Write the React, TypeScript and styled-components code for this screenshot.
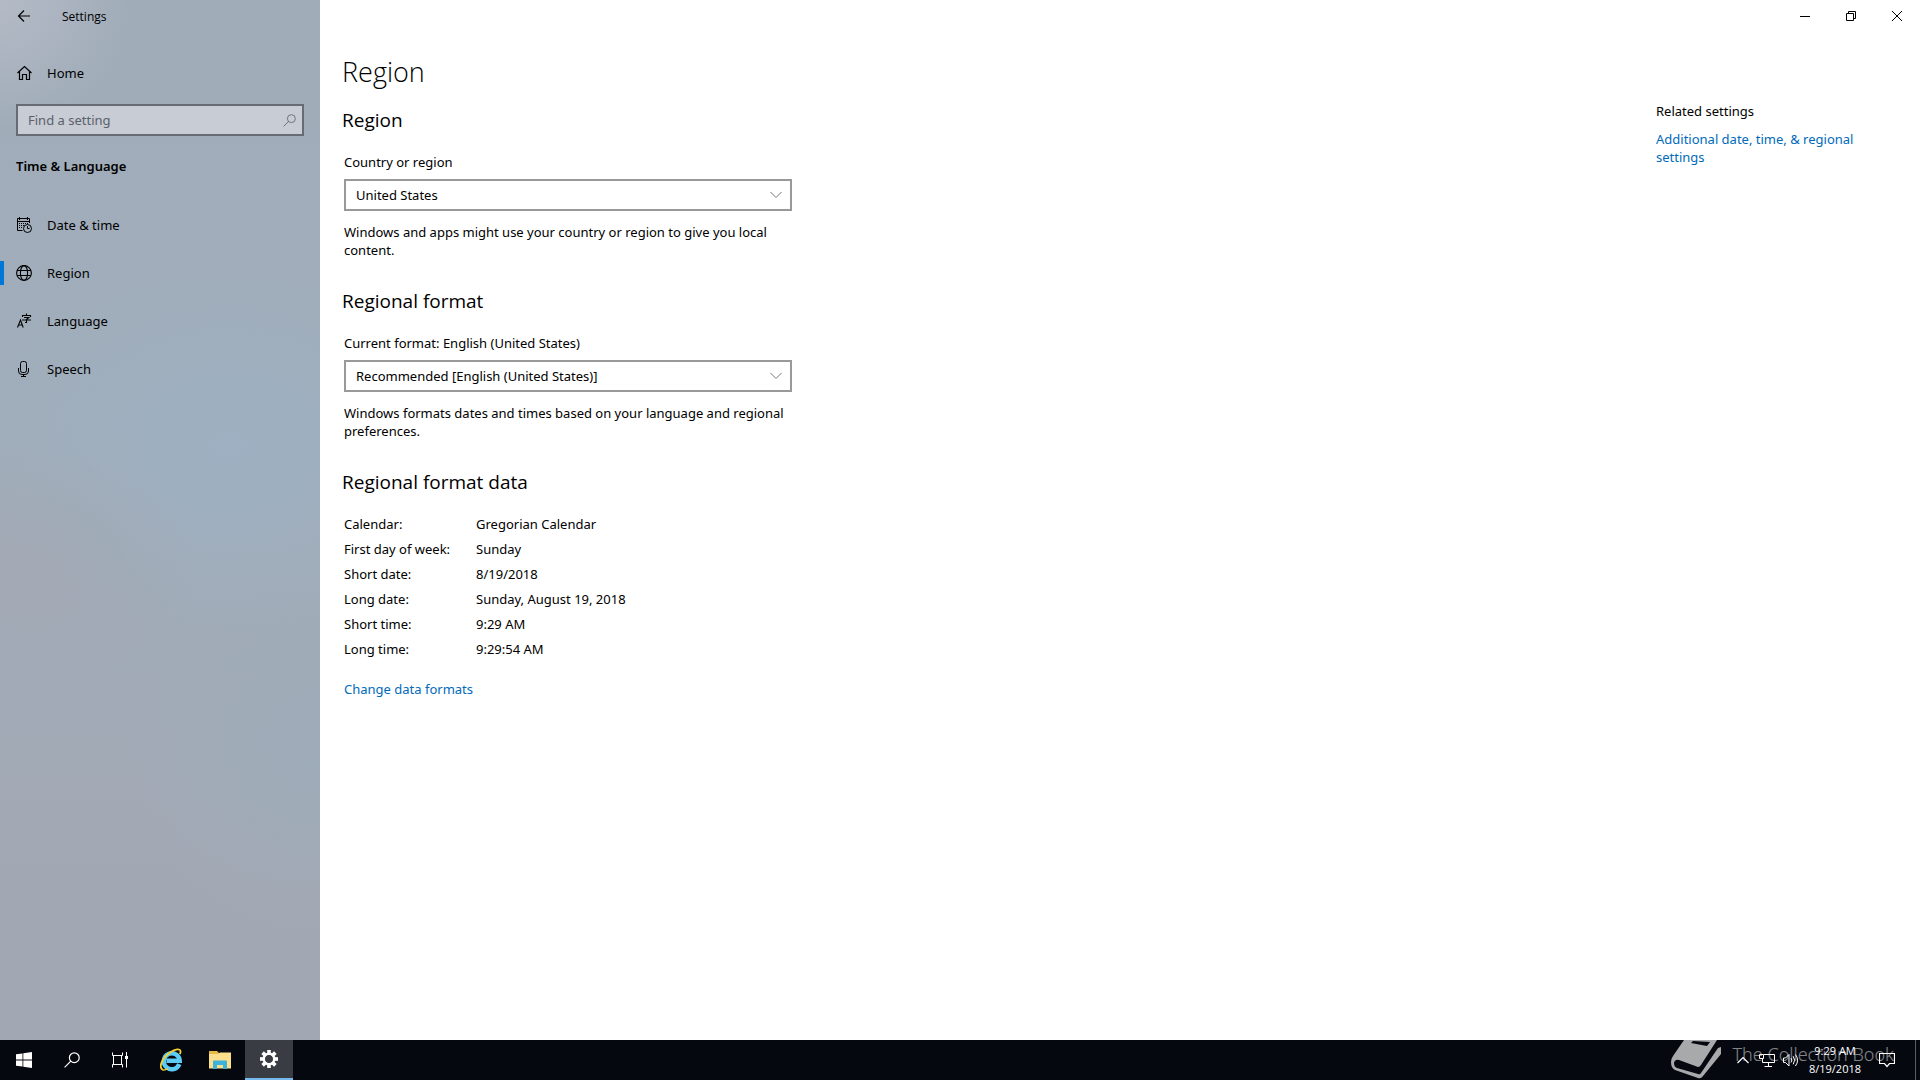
import React from 'react';
import styled, { createGlobalStyle, css } from 'styled-components';

const GlobalStyle = createGlobalStyle`
  *, *::before, *::after { box-sizing: border-box; }
  body {
    margin: 0;
    overflow: hidden;
    background: #fff;
    color: #000;
    font-family: "Noto Sans", "Open Sans", sans-serif;
    font-size: 13px;
    line-height: 18px;
  }
  button, input, select { font: inherit; color: inherit; }
  h1, h2, p { margin: 0; }
`;

const Desktop = styled.div`
  display: flex;
  flex-direction: column;
  height: 100vh;
`;

const Window = styled.div`
  flex: 1;
  min-height: 0;
  display: flex;
`;

const Sidebar = styled.aside`
  width: 320px;
  flex: none;
  background:
    radial-gradient(circle 130px at 0px 0px, rgba(184, 190, 201, 0.8), rgba(184, 190, 201, 0)),
    radial-gradient(ellipse 170px 130px at 30px 570px, rgba(163, 168, 179, 0.7), rgba(163, 168, 179, 0)),
    radial-gradient(ellipse 250px 190px at 230px 450px, rgba(157, 177, 195, 0.8), rgba(157, 177, 195, 0)),
    radial-gradient(ellipse 180px 180px at 310px 760px, rgba(158, 172, 186, 0.8), rgba(158, 172, 186, 0)),
    linear-gradient(180deg, #a1acb9 0%, #a0adba 40%, #a1abb7 62%, #a2a8b3 85%, #a2a8b3 100%);
`;

const TitleBar = styled.header`
  display: flex;
  align-items: center;
  height: 32px;
  font-family: "Open Sans", "Noto Sans", sans-serif;
  font-size: 12px;
`;

const WindowTitle = styled.span`
  padding-top: 2px;
`;

const PlainButton = styled.button`
  border: 0;
  padding: 0;
  background: transparent;
  display: flex;
  align-items: center;
  justify-content: center;
`;

const BackButton = styled(PlainButton)`
  width: 48px;
  height: 32px;
  margin-right: 14px;
`;

const rowStyle = css`
  display: flex;
  align-items: center;
  gap: 15px;
  height: 48px;
  padding-left: 16px;
  color: #000;
  text-decoration: none;
  svg { flex: none; }
`;

const HomeLink = styled.a`
  ${rowStyle}
  margin: 17px 0 7px;
`;

const SearchBox = styled.label`
  display: flex;
  align-items: center;
  height: 32px;
  margin: 0 16px;
  padding: 0 6px 0 10px;
  border: 2px solid #666c75;
  background: #c7ccd5;
  color: #5c6168;
`;

const SearchInput = styled.input`
  flex: 1;
  min-width: 0;
  border: 0;
  padding: 0;
  outline: 0;
  background: transparent;
  &::placeholder { color: #5c6168; opacity: 1; }
`;

const Category = styled.h2`
  padding: 21px 16px 26px;
  font-size: 13px;
  line-height: 18px;
  font-weight: 600;
`;

const NavLink = styled.a<{ $active?: boolean }>`
  ${rowStyle}
  position: relative;
  &::before {
    content: "";
    display: ${p => (p.$active ? 'block' : 'none')};
    position: absolute;
    left: 0;
    top: 12px;
    width: 4px;
    height: 24px;
    background: #0078d7;
  }
`;

const Content = styled.div`
  flex: 1;
  min-width: 0;
  display: flex;
  flex-direction: column;
`;

const WindowControls = styled.div`
  display: flex;
  justify-content: flex-end;
  height: 32px;
`;

const ControlButton = styled(PlainButton)`
  width: 46px;
  height: 32px;
`;

const Columns = styled.div`
  flex: 1;
  display: flex;
  justify-content: space-between;
  padding: 20px 24px 0 22px;
`;

const Main = styled.main`
  width: 450px;
`;

const PageTitle = styled.h1`
  font-family: "Open Sans", "Noto Sans", sans-serif;
  font-size: 27px;
  line-height: 40px;
  font-weight: 300;
`;

const Section = styled.section`
  padding-bottom: 14px;
`;

const SectionTitle = styled.h2`
  padding: 14px 0 19px;
  font-family: "Open Sans", "Noto Sans", sans-serif;
  font-size: 19px;
  line-height: 28px;
  font-weight: 400;
`;

const SectionBody = styled.div`
  padding-left: 2px;
`;

const FieldLabel = styled.label`
  display: block;
  padding-bottom: 8px;
`;

const SelectFrame = styled.div`
  display: grid;
  align-items: center;
  > * { grid-area: 1 / 1; }
  svg { justify-self: end; margin-right: 10px; pointer-events: none; }
`;

const Select = styled.select`
  appearance: none;
  width: 100%;
  height: 32px;
  padding: 0 32px 0 10px;
  border: 2px solid #999;
  border-radius: 0;
  background: #fff;
`;

const Hint = styled.p`
  padding-top: 12px;
`;

const FormatTable = styled.table`
  border-collapse: collapse;
  th, td { padding: 0 0 7px; font-weight: 400; text-align: left; }
  th { width: 132px; }
`;

const TextLink = styled.a`
  color: #006abb;
  text-decoration: none;
`;

const TableLink = styled(TextLink)`
  display: inline-block;
  margin-top: 15px;
`;

const Related = styled.aside`
  width: 240px;
  padding: 50px 30px 0 0;
`;

const RelatedTitle = styled.h2`
  padding-bottom: 10px;
  font-size: 13px;
  line-height: 18px;
  font-weight: 400;
`;

const Taskbar = styled.footer`
  position: relative;
  overflow: hidden;
  flex: none;
  display: flex;
  justify-content: space-between;
  height: 40px;
  background: #05080f;
  color: #fff;
  font-family: "Open Sans", "Noto Sans", sans-serif;
`;

const TaskGroup = styled.div`
  display: flex;
`;

const PinnedApps = styled.div`
  display: flex;
  gap: 1px;
  margin-left: 3px;
`;

const TaskButton = styled(PlainButton)<{ $active?: boolean }>`
  width: 48px;
  height: 40px;
  ${p => p.$active && css`
    background: #393d43;
    border-bottom: 2px solid #76b9ed;
  `}
`;

const TrayButton = styled(PlainButton)`
  width: 24px;
  height: 40px;
`;

const Clock = styled(PlainButton)`
  flex-direction: column;
  width: 64px;
  height: 40px;
  font-size: 11px;
  line-height: 18px;
  white-space: nowrap;
`;

const ActionCenter = styled(PlainButton)`
  width: 40px;
  height: 40px;
`;

const ShowDesktop = styled(PlainButton)`
  width: 5px;
  height: 40px;
  margin-left: 8px;
  border-left: 1px solid #5b5e63;
`;

const Watermark = styled.div`
  position: absolute;
  right: 26px;
  top: 0;
  display: flex;
  gap: 12px;
  height: 40px;
  color: #fff;
  pointer-events: none;
  svg { opacity: 0.65; }
`;

const WatermarkText = styled.span`
  padding-top: 2px;
  font-family: "Noto Sans", "Open Sans", sans-serif;
  font-size: 18px;
  line-height: 24px;
  font-weight: 300;
  opacity: 0.5;
`;

const Line = ({ size = 16, d, width = 1, color = 'currentColor' }: { size?: number; d: string; width?: number; color?: string }) => (
  <svg width={size} height={size} viewBox={`0 0 ${size} ${size}`} fill="none" stroke={color} strokeWidth={width} aria-hidden="true">
    <path d={d} />
  </svg>
);

const HomeIcon = () => <Line width={1.2} d="M1.5 8 L8.5 1.5 L15.5 8 M3.5 6.5 V14.5 H6.5 V9.5 H10.5 V14.5 H13.5 V6.5" />;

const CalendarIcon = () => (
  <svg width="16" height="16" viewBox="0 0 16 16" fill="none" stroke="currentColor" aria-hidden="true">
    <path d="M6.5 13.5H1.5V1.5H13.5V6M1.5 4.5H13.5M3.5 0V3M11.5 0V3" />
    <path d="M3 6.5H12M3 8.5H8M3 10.5H6" strokeDasharray="1 1" />
    <circle cx="11.5" cy="11.5" r="4" />
    <path d="M11.5 9V11.5H13.5" />
  </svg>
);

const GlobeIcon = () => (
  <svg width="16" height="16" viewBox="0 0 16 16" fill="none" stroke="currentColor" strokeWidth="1.1" aria-hidden="true">
    <circle cx="8" cy="8" r="7.4" />
    <ellipse cx="8" cy="8" rx="3.6" ry="7.4" />
    <path d="M1.2 5.5H14.8M1.2 10.5H14.8" />
  </svg>
);

const LanguageIcon = () => (
  <svg width="16" height="16" viewBox="0 0 16 16" fill="none" stroke="currentColor" strokeWidth="1.1" aria-hidden="true">
    <path d="M1.5 14.5L4.5 7L7.2 14.5M2.6 12H6.2" />
    <path d="M10.5 0.5V2M6.5 4V2.5H14.5V4M8 4.5H12.8L10.5 6.5V9.5H9M6 7H15" />
  </svg>
);

const MicIcon = () => <Line d="M4.5 2.5Q4.5 0.5 6.5 0.5H8.5Q10.5 0.5 10.5 2.5V9.5Q10.5 11.5 8.5 11.5H6.5Q4.5 11.5 4.5 9.5ZM2.5 7V10Q2.5 13.5 6 13.5H9Q12.5 13.5 12.5 10V7M7.5 13.5V15.5M5 15.5H10" />;

const SearchIcon = ({ size, width }: { size: number; width: number }) => (
  <svg width={size} height={size} viewBox="0 0 16 16" fill="none" stroke="currentColor" strokeWidth={width} aria-hidden="true">
    <circle cx="10.3" cy="5.7" r="4.9" />
    <path d="M6.8 9.2L0.6 15.4" />
  </svg>
);

const Chevron = () => (
  <svg width="12" height="8" viewBox="0 0 12 8" fill="none" stroke="#777" aria-hidden="true">
    <path d="M0.5 1L6 6.5L11.5 1" />
  </svg>
);

const WindowsLogo = () => (
  <svg width="16" height="16" viewBox="0 0 16 16" fill="#fff" aria-hidden="true">
    <path d="M0 2.3L6.5 1.4V7.6H0ZM7.3 1.3L16 0V7.6H7.3ZM0 8.4H6.5V14.6L0 13.7ZM7.3 8.4H16V16L7.3 14.7Z" />
  </svg>
);

const TaskViewIcon = () => (
  <svg width="16" height="16" viewBox="0 0 16 16" fill="none" stroke="#fff" aria-hidden="true">
    <path d="M0.5 0.5V3.5H10.5V0.5M1.5 3.5V12.5M9.5 3.5V12.5M0.5 15.5V12.5H10.5V15.5M14.5 0V15.5" />
    <path d="M13 4H16V7H13Z" fill="#fff" stroke="none" />
  </svg>
);

const ExplorerLogo = () => (
  <svg width="22" height="24" viewBox="0 0 22 24" fill="none" aria-hidden="true">
    <path d="M19.3 16.1A8 8 0 1 1 19.8 12.8H6.5" stroke="#5ccbf6" strokeWidth="4.4" />
    <path d="M3 22C-2 19.5 2 10 10 4.5C15 1 20.5 0.3 20.5 3.4C20.6 4.4 20.2 5.4 19.8 6.1" stroke="#f7cf2e" strokeWidth="1.8" />
    <path d="M3 22C4.5 22.5 6.5 21.5 8 20.7" stroke="#f7cf2e" strokeWidth="1.4" />
  </svg>
);

const FolderIcon = () => (
  <svg width="22" height="18" viewBox="0 0 22 18" aria-hidden="true">
    <path d="M0 0H8L10 2H21V6H0Z" fill="#e8b84b" />
    <path d="M0 3H9L11 1.5H22V17.5H0Z" fill="#fbdf8d" />
    <path d="M4 18V10.5Q4 9.5 5 9.5H17Q18 9.5 18 10.5V18H14V14H8V18Z" fill="#3fb2d9" />
  </svg>
);

const GearIcon = () => (
  <svg width="18" height="18" viewBox="-9 -9 18 18" aria-hidden="true">
    {[0, 45, 90, 135].map(a => (
      <rect key={a} x="-1.8" y="-9" width="3.6" height="18" fill="#fff" transform={`rotate(${a})`} />
    ))}
    <circle r="5.2" fill="#393d43" stroke="#fff" strokeWidth="2.6" />
    <circle r="3.8" fill="#393d43" />
  </svg>
);

const NetworkIcon = () => (
  <svg width="16" height="16" viewBox="0 0 16 16" fill="none" stroke="#fff" aria-hidden="true">
    <path d="M5 2.5H15.5V10.5H3.5V6M0.5 2.5H4.5V6.5H0.5ZM9.5 10.5V14.5M5.5 14.5H13" />
  </svg>
);

const VolumeIcon = () => (
  <svg width="16" height="16" viewBox="0 0 16 16" fill="none" stroke="#fff" aria-hidden="true">
    <path d="M0.5 6H2.5L6 2.5V14L2.5 10.5H0.5ZM8 6Q9.6 8.2 8 10.5M10.2 4.2Q13 8.2 10.2 12.3M12.4 2.5Q16.8 8.2 12.4 14" />
  </svg>
);

const BookIcon = () => (
  <svg width="50" height="40" viewBox="0 0 50 40" fill="#fff" fillRule="evenodd" aria-hidden="true">
    <path d="M13 0H46L30 25Q29 27 27 27L8 20Q4 19 3 23Q3 27 6 28L27 34Q29 35 30 33L47 8L50 7V14L32 36Q30 39 27 38L4 30Q0 28 0 22Q0 19 2 16ZM22 1L39 2L36 6L20 3Z" />
  </svg>
);

const navItems = [
  { label: 'Date & time', icon: <CalendarIcon /> },
  { label: 'Region', icon: <GlobeIcon />, active: true },
  { label: 'Language', icon: <LanguageIcon /> },
  { label: 'Speech', icon: <MicIcon /> },
];

const formats = [
  ['Calendar:', 'Gregorian Calendar'],
  ['First day of week:', 'Sunday'],
  ['Short date:', '8/19/2018'],
  ['Long date:', 'Sunday, August 19, 2018'],
  ['Short time:', '9:29 AM'],
  ['Long time:', '9:29:54 AM'],
];

export default function App() {
  return (
    <Desktop>
      <GlobalStyle />
      <Window>
        <Sidebar>
          <TitleBar>
            <BackButton aria-label="Back"><Line width={1.2} d="M14 8H2.5M8 2.5L2.5 8L8 13.5" /></BackButton>
            <WindowTitle>Settings</WindowTitle>
          </TitleBar>
          <HomeLink href="#home"><HomeIcon />Home</HomeLink>
          <SearchBox>
            <SearchInput type="text" placeholder="Find a setting" aria-label="Find a setting" />
            <SearchIcon size={13} width={1} />
          </SearchBox>
          <Category>Time &amp; Language</Category>
          <nav>
            {navItems.map(n => (
              <NavLink key={n.label} href="#nav" $active={n.active}>{n.icon}{n.label}</NavLink>
            ))}
          </nav>
        </Sidebar>
        <Content>
          <WindowControls>
            <ControlButton aria-label="Minimize"><Line size={10} d="M0 5.5H10" /></ControlButton>
            <ControlButton aria-label="Restore"><Line size={10} d="M0.5 2.5H7.5V9.5H0.5ZM2.5 2.5V0.5H9.5V7.5H7.5" /></ControlButton>
            <ControlButton aria-label="Close"><Line size={10} d="M0 0L10 10M10 0L0 10" /></ControlButton>
          </WindowControls>
          <Columns>
            <Main>
              <PageTitle>Region</PageTitle>
              <Section>
                <SectionTitle>Region</SectionTitle>
                <SectionBody>
                  <FieldLabel htmlFor="country">Country or region</FieldLabel>
                  <SelectFrame>
                    <Select id="country"><option>United States</option></Select>
                    <Chevron />
                  </SelectFrame>
                  <Hint>Windows and apps might use your country or region to give you local content.</Hint>
                </SectionBody>
              </Section>
              <Section>
                <SectionTitle>Regional format</SectionTitle>
                <SectionBody>
                  <FieldLabel htmlFor="format">Current format: English (United States)</FieldLabel>
                  <SelectFrame>
                    <Select id="format"><option>Recommended [English (United States)]</option></Select>
                    <Chevron />
                  </SelectFrame>
                  <Hint>Windows formats dates and times based on your language and regional preferences.</Hint>
                </SectionBody>
              </Section>
              <Section>
                <SectionTitle>Regional format data</SectionTitle>
                <SectionBody>
                  <FormatTable>
                    <tbody>
                      {formats.map(([k, v]) => (
                        <tr key={k}><th scope="row">{k}</th><td>{v}</td></tr>
                      ))}
                    </tbody>
                  </FormatTable>
                  <TableLink href="#formats">Change data formats</TableLink>
                </SectionBody>
              </Section>
            </Main>
            <Related>
              <RelatedTitle>Related settings</RelatedTitle>
              <TextLink href="#additional">Additional date, time, &amp; regional settings</TextLink>
            </Related>
          </Columns>
        </Content>
      </Window>
      <Taskbar>
        <TaskGroup>
          <TaskButton aria-label="Start"><WindowsLogo /></TaskButton>
          <TaskButton aria-label="Search"><SearchIcon size={16} width={1.2} /></TaskButton>
          <TaskButton aria-label="Task View"><TaskViewIcon /></TaskButton>
          <PinnedApps>
            <TaskButton aria-label="Internet Explorer"><ExplorerLogo /></TaskButton>
            <TaskButton aria-label="File Explorer"><FolderIcon /></TaskButton>
            <TaskButton aria-label="Settings" $active><GearIcon /></TaskButton>
          </PinnedApps>
        </TaskGroup>
        <TaskGroup>
          <TrayButton aria-label="Show hidden icons"><Line size={12} width={1.2} d="M0.5 9L6 3.5L11.5 9" /></TrayButton>
          <TrayButton aria-label="Network"><NetworkIcon /></TrayButton>
          <TrayButton aria-label="Volume"><VolumeIcon /></TrayButton>
          <Clock><span>9:29 AM</span><span>8/19/2018</span></Clock>
          <ActionCenter aria-label="Notifications"><Line width={1.2} d="M0.5 1.5H15.5V11.5H10.5L8 14.5L5.5 11.5H0.5Z" /></ActionCenter>
          <ShowDesktop aria-label="Show desktop" />
        </TaskGroup>
        <Watermark><BookIcon /><WatermarkText>The Collection Book</WatermarkText></Watermark>
      </Taskbar>
    </Desktop>
  );
}
